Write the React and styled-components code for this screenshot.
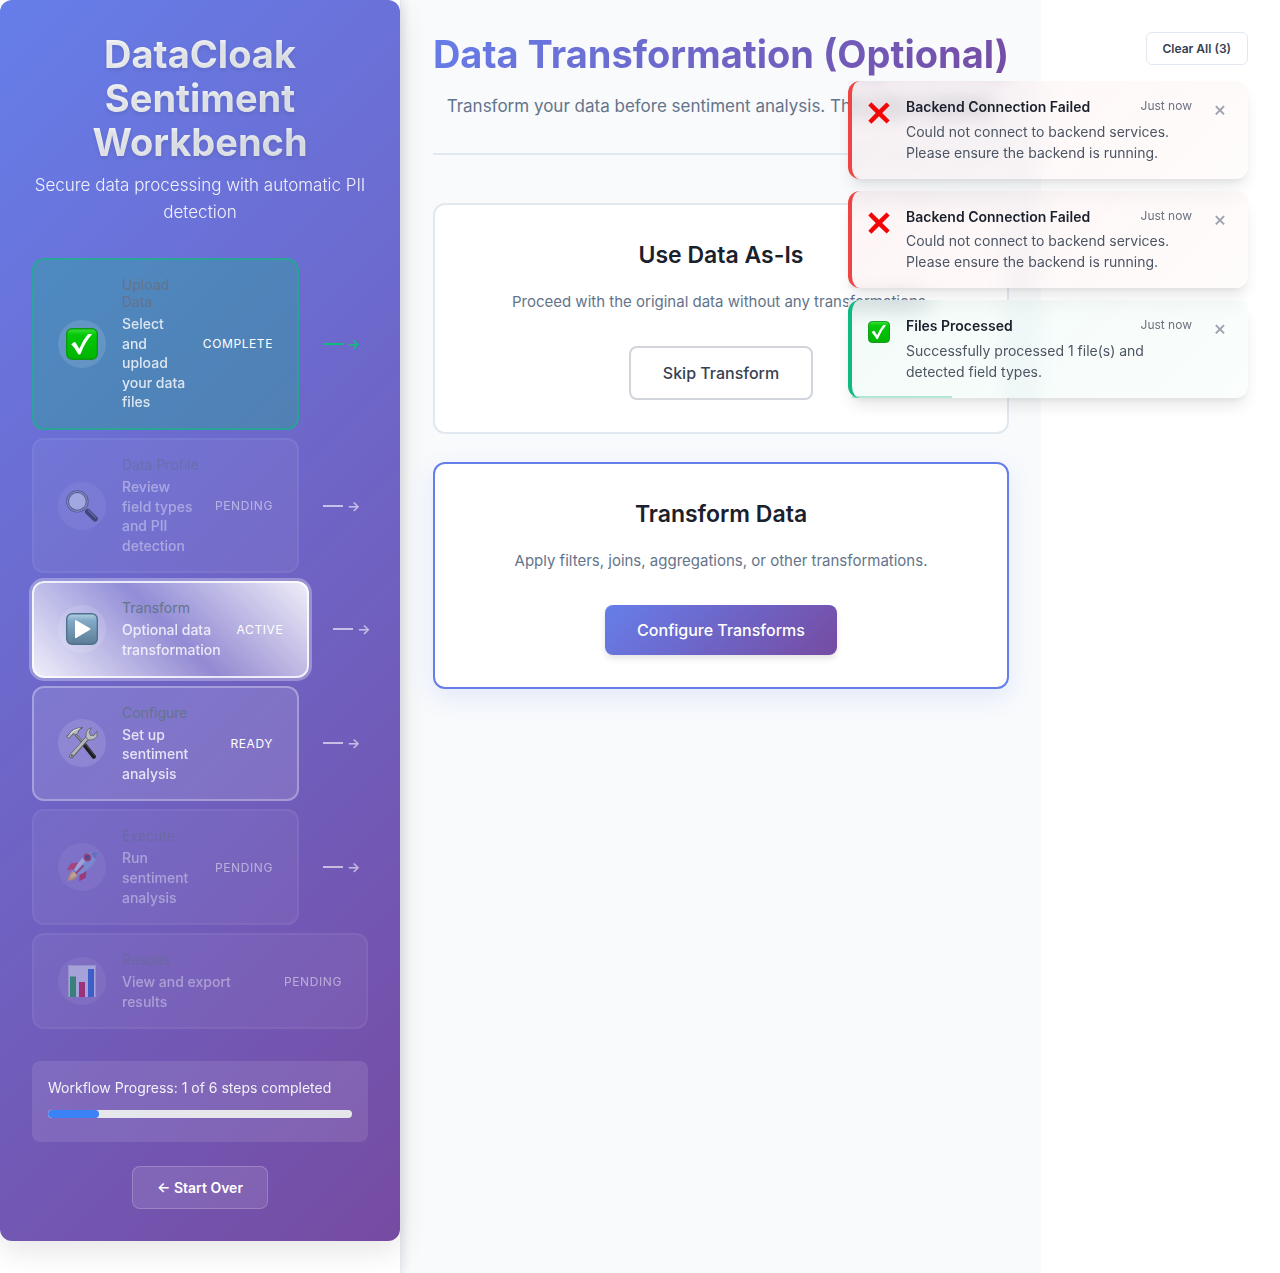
import React from "react";
import styled, { createGlobalStyle, css } from "styled-components";

const GlobalStyle = createGlobalStyle`
  *, *::before, *::after { box-sizing: border-box; }
  body {
    margin: 0;
    background: #fff;
    font-family: Inter, "Liberation Sans", sans-serif;
    color: #1a202c;
    -webkit-font-smoothing: antialiased;
  }
  h1, h2, h3, p, ol { margin: 0; padding: 0; }
  button { font-family: inherit; cursor: pointer; }
`;

const brand = "linear-gradient(135deg, #667eea 0%, #764ba2 100%)";

const Page = styled.div`
  display: flex;
  min-height: 100vh;
`;

const Sidebar = styled.aside`
  flex: 0 0 401px;
  min-width: 0;
  z-index: 1;
  background: #fff;
  border-right: 1px solid #e2e8f0;
  box-shadow: 2px 0 10px rgba(0, 0, 0, 0.1);
`;

const Workflow = styled.div`
  padding: 32px;
  border-radius: 12px;
  background: ${brand};
  box-shadow: 0 10px 30px rgba(0, 0, 0, 0.1);
  color: #fff;
`;

const SidebarHeader = styled.header`
  margin-bottom: 32px;
  text-align: center;
`;

const SidebarTitle = styled.h1`
  margin-bottom: 8px;
  font-size: 38px;
  line-height: 44px;
  font-weight: 700;
  color: transparent;
  background: linear-gradient(135deg, #fff 0%, #e2e8f0 100%);
  background-clip: text;
  -webkit-background-clip: text;
  text-shadow: 0 2px 4px rgba(0, 0, 0, 0.1);
`;

const SidebarSubtitle = styled.p`
  font-size: 17px;
  line-height: 27px;
  font-weight: 300;
  opacity: 0.9;
`;

const Steps = styled.ol`
  display: flex;
  flex-direction: column;
  gap: 8px;
  list-style: none;
`;

const StepRow = styled.li`
  display: flex;
  align-items: center;
`;

const stepLooks = {
  complete: css`
    background: rgba(16, 185, 129, 0.3);
    border-color: rgba(16, 185, 129, 0.6);
  `,
  pending: css`
    background: rgba(255, 255, 255, 0.1);
    border-color: rgba(255, 255, 255, 0.1);
    opacity: 0.5;
    cursor: not-allowed;
  `,
  active: css`
    background: linear-gradient(45deg, rgba(255, 255, 255, 0.9) 0%, rgba(255, 255, 255, 0.25) 50%, rgba(255, 255, 255, 0.9) 100%);
    background-origin: border-box;
    border-color: rgba(255, 255, 255, 0.8);
    box-shadow: 0 0 0 3px rgba(255, 255, 255, 0.3);
  `,
  ready: css`
    background: rgba(255, 255, 255, 0.12);
    border-color: rgba(255, 255, 255, 0.3);
  `,
};

const StepCard = styled.button`
  flex: 1;
  display: flex;
  align-items: center;
  gap: 16px;
  padding: 16px 24px;
  border: 2px solid transparent;
  border-radius: 12px;
  color: #fff;
  text-align: left;
  ${(p) => stepLooks[p.$status]}
`;

const StepIcon = styled.span`
  flex: 0 0 48px;
  height: 48px;
  display: flex;
  align-items: center;
  justify-content: center;
  border-radius: 50%;
  background: rgba(255, 255, 255, 0.12);
`;

const StepText = styled.span`
  flex: 1;
  display: flex;
  flex-direction: column;
  gap: 4px;
`;

const StepName = styled.span`
  font-size: 14px;
  line-height: 17px;
  font-weight: 400;
  color: #64748b;
`;

const StepNote = styled.span`
  font-size: 14px;
  line-height: 1.4;
  font-weight: 500;
  opacity: 0.8;
`;

const StepStatus = styled.span`
  font-size: 12px;
  font-weight: 400;
  letter-spacing: 0.05em;
  text-transform: uppercase;
`;

const Connector = styled.span`
  flex: 0 1 69px;
  min-width: 60px;
  display: flex;
  align-items: center;
  gap: 4px;
  padding-left: 24px;
  font-size: 14px;
  line-height: 20px;
  font-weight: 600;
  color: ${(p) => (p.$done ? "#10b981" : "rgba(255, 255, 255, 0.6)")};

  &::before {
    content: "";
    flex: 0 0 20px;
    height: 2px;
    background: currentColor;
  }
`;

const ProgressPanel = styled.section`
  margin-top: 32px;
  padding: 16px 16px 24px;
  border-radius: 8px;
  background: rgba(255, 255, 255, 0.1);
`;

const ProgressLabel = styled.p`
  margin-bottom: 11px;
  font-size: 14px;
  line-height: 22px;
  opacity: 0.9;
`;

const ProgressTrack = styled.div`
  height: 8px;
  border-radius: 4px;
  background: #e5e7eb;
  overflow: hidden;
`;

const ProgressFill = styled.div`
  height: 100%;
  border-radius: 4px;
  background: #3b82f6;
`;

const StartOver = styled.button`
  display: block;
  margin: 24px auto 0;
  padding: 12px 24px;
  border: 1px solid rgba(255, 255, 255, 0.2);
  border-radius: 8px;
  background: rgba(255, 255, 255, 0.1);
  color: #fff;
  font-size: 14px;
  line-height: 17px;
  font-weight: 600;
`;

const Main = styled.main`
  flex: 0 1 640px;
  min-width: 0;
  padding: 32px;
  background: #f8fafc;
`;

const MainHeader = styled.header`
  margin-bottom: 48px;
  padding-bottom: 32px;
  border-bottom: 2px solid #e2e8f0;
  text-align: center;
`;

const MainTitle = styled.h2`
  margin: 0 -8px 16px;
  font-size: 38px;
  line-height: 44px;
  font-weight: 700;
  color: transparent;
  background: ${brand};
  background-clip: text;
  -webkit-background-clip: text;
`;

const MainSubtitle = styled.p`
  font-size: 17px;
  line-height: 29px;
  color: #64748b;
`;

const Options = styled.div`
  display: flex;
  flex-direction: column;
  gap: 28px;
`;

const OptionCard = styled.section`
  padding: 32px;
  border: 2px solid ${(p) => (p.$primary ? "#667eea" : "#e2e8f0")};
  border-radius: 12px;
  background: #fff;
  box-shadow: ${(p) => (p.$primary ? "0 8px 25px rgba(102, 126, 234, 0.15)" : "none")};
  text-align: center;
`;

const OptionTitle = styled.h3`
  margin-bottom: 16px;
  font-size: 23px;
  line-height: 36px;
  font-weight: 600;
`;

const OptionText = styled.p`
  margin-bottom: 32px;
  font-size: 15px;
  line-height: 25px;
  color: #64748b;
`;

const ActionButton = styled.button`
  padding: 12px 32px;
  border-radius: 8px;
  font-size: 16px;
  line-height: 26px;
  font-weight: 500;
  ${(p) =>
    p.$primary
      ? css`
          border: 0;
          background: ${brand};
          color: #fff;
          box-shadow: 0 4px 6px rgba(0, 0, 0, 0.1);
        `
      : css`
          border: 2px solid #d1d5db;
          background: #fff;
          color: #374151;
        `}
`;

const Notifications = styled.div`
  position: fixed;
  top: 32px;
  right: 32px;
  z-index: 10;
  width: 400px;
  display: flex;
  flex-direction: column;
  gap: 12px;
`;

const ClearAll = styled.button`
  align-self: flex-end;
  margin-bottom: 4px;
  padding: 8px 16px;
  border: 1px solid #e2e8f0;
  border-radius: 6px;
  background: #fff;
  color: #374151;
  font-size: 12px;
  line-height: 15px;
  font-weight: 600;
`;

const toastTones = {
  error: { edge: "#ef4444", rgb: "239, 68, 68" },
  success: { edge: "#10b981", rgb: "16, 185, 129" },
};

/* ::before frosts whatever lies under the card: it reaches past the edges, where
   the blur would fade out, and is masked back to the card. ::after paints the
   tinted card itself. */
const Toast = styled.article`
  position: relative;
  isolation: isolate;
  display: flex;
  align-items: flex-start;
  gap: 16px;
  padding: 16px 16px 16px 20px;

  &::before {
    content: "";
    position: absolute;
    inset: -32px;
    padding: 32px;
    z-index: -1;
    mask: linear-gradient(#000, #000) content-box no-repeat;
    backdrop-filter: blur(10px);
    pointer-events: none;
  }

  &::after {
    content: "";
    position: absolute;
    inset: 0;
    z-index: -1;
    border-left: 4px solid ${(p) => toastTones[p.$tone].edge};
    border-radius: 12px;
    background: linear-gradient(
      135deg,
      rgba(${(p) => toastTones[p.$tone].rgb}, 0.05) 0%,
      rgba(${(p) => toastTones[p.$tone].rgb}, 0.02) 100%
    );
    box-shadow: 0 10px 15px -3px rgba(0, 0, 0, 0.1), 0 4px 6px -2px rgba(0, 0, 0, 0.05);
  }
`;

const ToastIcon = styled.span`
  flex: 0 0 22px;
  display: flex;
  padding-top: 5px;
`;

const ToastBody = styled.div`
  flex: 1;
`;

const ToastHead = styled.div`
  display: flex;
  justify-content: space-between;
  margin-bottom: 4px;
`;

const ToastTitle = styled.h3`
  font-size: 14px;
  line-height: 1.4;
  font-weight: 600;
`;

const ToastTime = styled.time`
  font-size: 12px;
  line-height: 17px;
  color: #6b7280;
`;

const ToastMessage = styled.p`
  max-width: 272px;
  font-size: 14px;
  line-height: 1.5;
  color: #4b5563;
`;

const ToastClose = styled.button`
  flex: 0 0 24px;
  height: 24px;
  padding: 0;
  border: 0;
  background: none;
  color: #9ca3af;
  font-size: 20px;
  line-height: 24px;
  font-weight: 500;
`;

const ToastTimer = styled.span`
  position: absolute;
  left: 4px;
  bottom: 0;
  height: 2px;
  background: rgba(16, 185, 129, 0.3);
`;

function CheckIcon({ size = 32 }) {
  return (
    <svg width={size} height={size} viewBox="0 0 32 32" aria-hidden="true">
      <defs>
        <linearGradient id="check-fill" x1="0" y1="0" x2="0" y2="1">
          <stop offset="0" stopColor="#3fe03f" />
          <stop offset="0.2" stopColor="#04c808" />
          <stop offset="1" stopColor="#00b400" />
        </linearGradient>
      </defs>
      <rect x="0.7" y="0.7" width="30.6" height="30.6" rx="5.5" fill="url(#check-fill)" stroke="#0b9a14" strokeWidth="1.4" />
      <path d="M5.2 16.2L8 14.2Q9 13.8 9.7 14.8L13.3 20.8Q16.8 12.4 21.6 6.6Q22.2 5.8 23.2 5.9L26.3 6Q18.8 14.2 14.9 25.2Q14.5 26.6 13.5 26.6Q12.5 26.6 11.9 25.4Q9 20 5.2 16.2Z" fill="#fff" />
    </svg>
  );
}

function CrossIcon({ size = 22 }) {
  return (
    <svg width={size} height={size} viewBox="0 0 22 22" aria-hidden="true">
      <path d="M3.3 .3L11 7.8L18.5 .4L21.7 3.4L14.2 11L21.7 18.4L18.6 21.6L11 14.2L3.4 21.7L.3 18.7L7.8 11L.3 3.5Z" fill="#f20505" />
    </svg>
  );
}

function SearchIcon() {
  return (
    <svg width="32" height="32" viewBox="0 0 32 32" aria-hidden="true">
      <path d="M19.5 19.5L23 23" stroke="#8d98a3" strokeWidth="3.4" />
      <path d="M21.8 21.8L29 28.8" stroke="#17202c" strokeWidth="5.6" strokeLinecap="round" />
      <path d="M22.5 20.8L29.8 27.8" stroke="#566170" strokeWidth="1.3" strokeLinecap="round" />
      <circle cx="11.4" cy="11.4" r="9.8" fill="#d9e3ef" stroke="#35414f" strokeWidth="2.8" />
      <circle cx="11.4" cy="11.4" r="9.9" fill="none" stroke="#9aa6b1" strokeWidth="1.2" />
    </svg>
  );
}

function PlayIcon() {
  return (
    <svg width="32" height="32" viewBox="0 0 32 32" aria-hidden="true">
      <defs>
        <linearGradient id="play-fill" x1="0" y1="0" x2="0" y2="1">
          <stop offset="0" stopColor="#b4d2e5" />
          <stop offset="0.22" stopColor="#83aac7" />
          <stop offset="1" stopColor="#5b7c96" />
        </linearGradient>
      </defs>
      <rect x="0.7" y="0.7" width="30.6" height="30.6" rx="5.5" fill="url(#play-fill)" stroke="#4f718d" strokeWidth="1.4" />
      <path d="M9 8Q9 6.8 10.1 7.3L24 15.2Q25 16 24 16.8L10.1 24.9Q9 25.4 9 24.2Z" fill="#fff" />
    </svg>
  );
}

function ToolsIcon() {
  return (
    <svg width="32" height="32" viewBox="0 0 32 32" aria-hidden="true">
      <path d="M9.5 7.5L17 16" stroke="#5d5f61" strokeWidth="2.6" />
      <path d="M9.5 7.2L16.5 15" stroke="#a9adb2" strokeWidth="0.9" />
      <path d="M17 16L27.8 29.6" stroke="#1d1e1f" strokeWidth="4.2" strokeLinecap="round" />
      <path d="M18.4 16.2L28.8 28.8" stroke="#50545a" strokeWidth="0.9" />
      <path d="M21.5 11L5.4 29" stroke="#5c5f63" strokeWidth="4.4" strokeLinecap="round" />
      <path d="M21.3 10.9L5.3 28.8" stroke="#b4b8bd" strokeWidth="2.8" strokeLinecap="round" />
      <circle cx="5.8" cy="28.4" r="1.1" fill="#515459" />
      <path d="M25.3 .8Q20.4 2.2 20.1 6.8L20 10.6L22.8 13Q28.8 13.2 31 9.2L30.9 4.4L27.8 8.6L24.4 8.2L23.3 5.2Z" fill="#b9bdc2" stroke="#5c6065" strokeWidth="0.8" />
      <path d="M.5 9.3L3.2 7.2Q5.3 1.4 16.8 .6Q11.8 2.6 12 5.6L9.9 8L7.3 6.6L3 11.4Z" fill="#b4b9be" stroke="#4f5358" strokeWidth="0.8" />
      <path d="M4.3 6.8Q7.2 2.8 13.6 1.5" stroke="#edf0f2" strokeWidth="1" fill="none" />
    </svg>
  );
}

function RocketIcon() {
  return (
    <svg width="32" height="32" viewBox="0 0 32 32" aria-hidden="true">
      <path d="M13.8 11.3L4.8 12.4L.6 19.2L8.3 18.3L12 16Z" fill="#df2840" />
      <path d="M20.6 18.5L19.8 26.7L13.2 30.3L13.7 23Z" fill="#c91634" />
      <path d="M7 19.5Q2.6 22.6 1.7 29.7Q8.5 29.6 12 24.4Z" fill="#f4ac42" />
      <path d="M7.5 20.8Q4.9 23.2 4 27.6Q8.4 26.9 10.8 24Z" fill="#ffe779" />
      <path d="M31.5 .6Q22 .8 15.2 8.3Q10.5 13.5 8.1 18.8L13.4 24Q19.5 21.5 24.4 16.6Q31.3 9.6 31.5 .6Z" fill="#82afe0" />
      <path d="M31.5 .6Q22 .8 15.2 8.3Q10.5 13.5 8.1 18.8L9.9 20.5Q17.3 11 31.5 .6Z" fill="#cbdff4" />
      <path d="M31.5 .6Q26.5 .8 23.8 2.2L29.6 8Q31.4 4.6 31.5 .6Z" fill="#5c7fc4" />
      <circle cx="21.4" cy="6.4" r="4" fill="#c2283f" />
      <circle cx="21.4" cy="6.4" r="2.4" fill="#26345e" />
      <path d="M17.2 14.8L10.3 22" stroke="#b51c34" strokeWidth="1.7" strokeLinecap="round" />
    </svg>
  );
}

function ChartIcon() {
  return (
    <svg width="32" height="32" viewBox="0 0 32 32" aria-hidden="true">
      <path d="M2 0H30V32H2Z" fill="#dce5f5" />
      <path d="M2.5 32V.5H29.5V32" fill="none" stroke="#b4c3dc" />
      <path d="M4 11.5H10V32H4Z" fill="#07a23b" />
      <path d="M13 17H19V32H13Z" fill="#c50b3c" />
      <path d="M22 4H28V32H22Z" fill="#0a60d8" />
    </svg>
  );
}

const steps = [
  { name: "Upload Data", note: "Select and upload your data files", status: "complete", Icon: CheckIcon },
  { name: "Data Profile", note: "Review field types and PII detection", status: "pending", Icon: SearchIcon },
  { name: "Transform", note: "Optional data transformation", status: "active", Icon: PlayIcon },
  { name: "Configure", note: "Set up sentiment analysis", status: "ready", Icon: ToolsIcon },
  { name: "Execute", note: "Run sentiment analysis", status: "pending", Icon: RocketIcon },
  { name: "Results", note: "View and export results", status: "pending", Icon: ChartIcon },
];

const toasts = [
  { tone: "error", title: "Backend Connection Failed", message: "Could not connect to backend services. Please ensure the backend is running." },
  { tone: "error", title: "Backend Connection Failed", message: "Could not connect to backend services. Please ensure the backend is running." },
  { tone: "success", title: "Files Processed", message: "Successfully processed 1 file(s) and detected field types.", remaining: 25 },
];

export default function App() {
  const completed = steps.filter((s) => s.status === "complete").length;
  return (
    <>
      <GlobalStyle />
      <Page>
        <Sidebar>
          <Workflow>
            <SidebarHeader>
              <SidebarTitle>DataCloak Sentiment Workbench</SidebarTitle>
              <SidebarSubtitle>Secure data processing with automatic PII detection</SidebarSubtitle>
            </SidebarHeader>
            <Steps>
              {steps.map(({ name, note, status, Icon }, i) => (
                <StepRow key={name}>
                  <StepCard
                    type="button"
                    $status={status}
                    disabled={status === "pending"}
                    aria-current={status === "active" ? "step" : undefined}
                  >
                    <StepIcon><Icon /></StepIcon>
                    <StepText>
                      <StepName>{name}</StepName>
                      <StepNote>{note}</StepNote>
                    </StepText>
                    <StepStatus>{status}</StepStatus>
                  </StepCard>
                  {i < steps.length - 1 && (
                    <Connector $done={status === "complete"} aria-hidden="true">→</Connector>
                  )}
                </StepRow>
              ))}
            </Steps>
            <ProgressPanel>
              <ProgressLabel id="progress-label">
                {`Workflow Progress: ${completed} of ${steps.length} steps completed`}
              </ProgressLabel>
              <ProgressTrack
                role="progressbar"
                aria-labelledby="progress-label"
                aria-valuemin={0}
                aria-valuemax={steps.length}
                aria-valuenow={completed}
              >
                <ProgressFill style={{ width: `${(completed / steps.length) * 100}%` }} />
              </ProgressTrack>
            </ProgressPanel>
            <StartOver type="button">← Start Over</StartOver>
          </Workflow>
        </Sidebar>

        <Main>
          <MainHeader>
            <MainTitle>Data Transformation (Optional)</MainTitle>
            <MainSubtitle>Transform your data before sentiment analysis. This step is optional.</MainSubtitle>
          </MainHeader>
          <Options>
            <OptionCard>
              <OptionTitle>Use Data As-Is</OptionTitle>
              <OptionText>Proceed with the original data without any transformations.</OptionText>
              <ActionButton type="button">Skip Transform</ActionButton>
            </OptionCard>
            <OptionCard $primary>
              <OptionTitle>Transform Data</OptionTitle>
              <OptionText>Apply filters, joins, aggregations, or other transformations.</OptionText>
              <ActionButton type="button" $primary>Configure Transforms</ActionButton>
            </OptionCard>
          </Options>
        </Main>
      </Page>

      <Notifications aria-live="polite">
        <ClearAll type="button">{`Clear All (${toasts.length})`}</ClearAll>
        {toasts.map(({ tone, title, message, remaining }, i) => (
          <Toast key={i} $tone={tone}>
            <ToastIcon>{tone === "error" ? <CrossIcon /> : <CheckIcon size={22} />}</ToastIcon>
            <ToastBody>
              <ToastHead>
                <ToastTitle>{title}</ToastTitle>
                <ToastTime>Just now</ToastTime>
              </ToastHead>
              <ToastMessage>{message}</ToastMessage>
            </ToastBody>
            <ToastClose type="button" aria-label="Dismiss notification">×</ToastClose>
            {remaining && <ToastTimer style={{ width: `${remaining}%` }} />}
          </Toast>
        ))}
      </Notifications>
    </>
  );
}
